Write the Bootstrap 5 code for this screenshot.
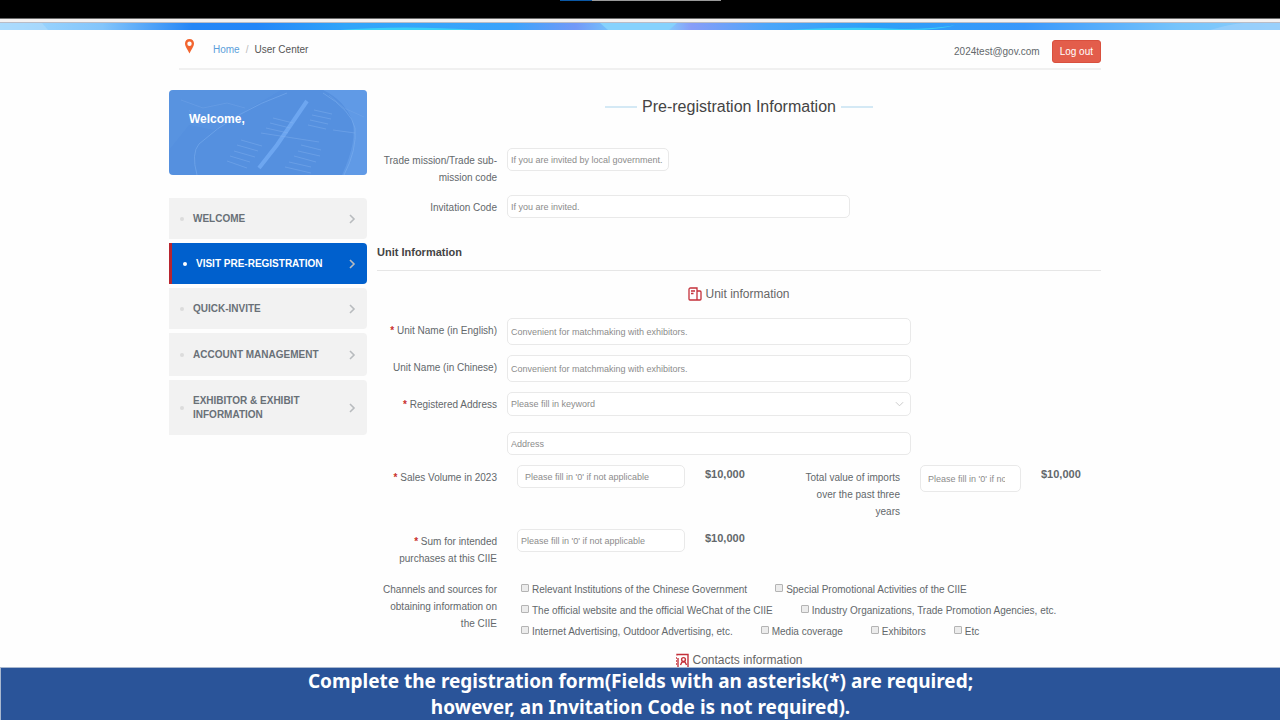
<!DOCTYPE html>
<html lang="en">
<head>
<meta charset="utf-8">
<meta name="viewport" content="width=device-width, initial-scale=1">
<title>User Center - Pre-registration Information</title>
<link href="https://cdn.jsdelivr.net/npm/bootstrap@5.3.0/dist/css/bootstrap.min.css" rel="stylesheet">
<style>
  body { font-family: "Liberation Sans", Arial, sans-serif; font-size: 10px; line-height: 17px; color: #63686b; background: #fefefe; }
  .top-strip { height: 18px; background: #000; }
  .top-strip span { height: 1px; }
  .tab-blue { width: 32px; background: #0a57a4; }
  .tab-gray { width: 129px; background: #9a9a9a; }
  .chrome-line { height: 5px; background: #f3f1f1; border-top: 1px solid #6b6b6b; border-bottom: 1px solid #b9bcc6; }
  .hero-strip { height: 7px; }
  .page-wrap { padding-right: 10px; }
  .page-body { max-width: 932px; }
  .top-bar { margin-left: 10px; height: 40px; border-bottom: 2px solid #f0f0f0; margin-bottom: 20px; }
  .crumb-bar { padding-top: 11px; }
  .crumb-bar .breadcrumb { --bs-breadcrumb-item-padding-x: 6px; --bs-breadcrumb-divider-color: #bbb; font-size: 10px; }
  .crumb-bar a { color: #5c9edb; text-decoration: none; }
  .crumb-bar .active { color: #555; }
  .pin-icon { width: 20px; height: 16px; margin-right: 14px; margin-top: -3px; }
  .account-bar { padding-top: 10px; gap: 12px; }
  .account-name { padding-top: 3px; }
  .btn-logout { --bs-btn-bg: #e35d4b; --bs-btn-color: #fff; --bs-btn-border-color: #d9503e; --bs-btn-hover-bg: #d14f3e; --bs-btn-hover-color: #fff; --bs-btn-padding-x: 7px; --bs-btn-padding-y: 2px; --bs-btn-font-size: 10px; --bs-btn-line-height: 17px; --bs-btn-border-radius: 3px; }

  .side-col { width: 198px; }
  .welcome-card { height: 85px; border-radius: 4px; background: #5590df; margin-bottom: 23px; }
  .welcome-card svg { position: absolute; inset: 0; }
  .welcome-card strong { position: relative; padding: 21px 20px; font-size: 12px; color: #fff; font-weight: 900; }
  .side-nav { gap: 4px; font-weight: 700; line-height: 14px; }
  .side-nav a { padding: 14px 11px 13px; background: #f2f2f2; color: #697077; text-decoration: none; border-radius: 0 4px 4px 0; }
  .side-nav a.tall { padding-top: 15px; padding-bottom: 14px; }
  .side-nav a.current { background: #0060cd; color: #fff; border-left: 3px solid #b8252f; }
  .dot { width: 4px; height: 4px; border-radius: 50%; background: #dcdcdc; margin-right: 9px; }
  .current .dot { background: #fff; }
  .arrow { width: 8px; height: 10px; stroke: #b8bbbe; fill: none; stroke-width: 1.600; }

  .main-col { padding-left: 10px; min-width: 0; }
  .page-title { font-size: 16px; line-height: 34px; color: #444; margin-bottom: 24px; gap: 5px; }
  .page-title::before, .page-title::after { content: ""; width: 32px; height: 2px; background: #d4e9f5; }
  .section-title { font-size: 11px; line-height: 20px; font-weight: 700; color: #444; margin: 24px 0 13px; padding-bottom: 8px; border-bottom: 1px solid #e6e6e6; }
  .sub-title { font-size: 12px; line-height: 20px; color: #666; margin: 0; gap: 3px; }
  .sub-title.first { margin-bottom: 14px; }
  .sub-title svg { width: 14px; height: 14px; }
  .field-row { gap: 10px; margin-bottom: 10px; }
  .field-row.tight { margin-bottom: 9px; }
  .field-name { flex: 0 0 120px; padding-top: 4px; text-align: right; }
  .field-name.second { flex-basis: 98px; }
  .req { color: #c9302c; font-weight: 700; }
  .form-control, .form-select { font-size: 9px; line-height: 13px; height: 23px; min-height: 23px; padding: 4px 3px; border: 1px solid #e9e9e9; border-radius: 5px; background-color: #fff; color: #8c8c8c; }
  .form-control::placeholder { color: #8c8c8c; opacity: 1; }
  .form-control.roomy { height: 27px; }
  .form-control.inset { padding-left: 7px; padding-right: 15px; }
  .form-select { height: 24px; background-image: url("data:image/svg+xml,%3Csvg xmlns='http://www.w3.org/2000/svg' viewBox='0 0 10 6'%3E%3Cpath d='M1 1l4 4 4-4' fill='none' stroke='%23c4c4c4'/%3E%3C/svg%3E"); background-size: 9px 6px; background-position: right 6px center; }
  .w-code { max-width: 162px; } .w-invite { max-width: 343px; } .w-wide { max-width: 404px; }
  .w-sum { max-width: 168px; margin-left: 10px; } .w-import { max-width: 101px; margin-left: 10px; }
  .money-row { padding-right: 21px; }
  .amount { font-weight: 700; font-size: 11px; width: 39px; margin: 1px 0 0 10px; }
  .checks { padding: 2px 0 0 24px; line-height: 21px; column-gap: 28px; }
  .checks .form-check { padding: 0; min-height: 0; gap: 3px; }
  .checks .form-check-input { float: none; margin: 0 0 3px; width: 8px; height: 8px; border: 1px solid #b4b4b4; border-radius: 1px; background-color: #ececec; }
  .line-break { flex-basis: 100%; height: 0; }

  .caption-bar { background: #2a5499; border-top: 1px solid #a9b8cf; border-left: 1px solid #a9b8cf; color: #fff; font-family: "Noto Sans", "Open Sans", sans-serif; font-weight: 700; font-size: 19px; line-height: 26px; }
</style>
</head>
<body>
<div class="top-strip d-flex justify-content-center"><span class="tab-blue"></span><span class="tab-gray"></span></div>
<div class="chrome-line"></div>
<svg class="hero-strip d-block w-100" viewBox="0 0 1280 7" preserveAspectRatio="none" aria-hidden="true">
  <defs><linearGradient id="hero">
    <stop offset="0" stop-color="#a5dbff"/><stop offset=".08" stop-color="#83c5fb"/><stop offset=".15" stop-color="#2486f6"/><stop offset=".2" stop-color="#2386f8"/>
    <stop offset=".27" stop-color="#30a5fa"/><stop offset=".4" stop-color="#3ba3fb"/><stop offset=".45" stop-color="#7399f8"/><stop offset=".48" stop-color="#75c7fc"/>
    <stop offset=".52" stop-color="#84cffc"/><stop offset=".54" stop-color="#889df8"/><stop offset=".6" stop-color="#4ba6fa"/><stop offset=".68" stop-color="#2d9ff8"/>
    <stop offset=".8" stop-color="#3998fb"/><stop offset=".92" stop-color="#76c4fb"/><stop offset="1" stop-color="#8ccdfb"/>
  </linearGradient></defs>
  <path d="M0 0h1280v7H0z" fill="url(#hero)"/>
  <path d="M0 0h42l6 7H0z" fill="#b0dcfb" opacity=".6"/>
  <path d="M600 0h77l-8 7h-61z" fill="#86d2fd"/>
  <path d="M340 7q60-5 140 0zM790 7q60-4 110-1q40 0 60-5q-20 6-50 6z" fill="#3ddcf6" opacity=".8"/>
  <path d="M1210 7q20-6 34-7h36v7z" fill="#a4d2fb" opacity=".6"/>
</svg>

<div class="page-wrap">
<div class="page-body mx-auto">
  <header class="top-bar d-flex justify-content-between">
    <nav class="crumb-bar d-flex align-items-start" aria-label="breadcrumb">
      <svg class="pin-icon" viewBox="0 0 20 16" aria-hidden="true"><path fill="#f2652f" fill-rule="evenodd" d="M10.500 1C7.700 1 6 3 6 5.500C6 8.500 8.500 11 10.500 15.500C12.500 11 15 8.500 15 5.500C15 3 13.300 1 10.500 1zm0 2.500a2.200 2.200 0 1 1 0 4.400a2.200 2.200 0 0 1 0-4.400z"/></svg>
      <ol class="breadcrumb mb-0">
        <li class="breadcrumb-item"><a href="#">Home</a></li>
        <li class="breadcrumb-item active" aria-current="page">User Center</li>
      </ol>
    </nav>
    <div class="account-bar d-flex align-items-start">
      <span class="account-name">2024test@gov.com</span>
      <button type="button" class="btn btn-logout">Log out</button>
    </div>
  </header>

  <div class="d-flex flex-column flex-md-row">
    <aside class="side-col flex-shrink-0">
      <div class="welcome-card position-relative overflow-hidden d-flex align-items-start">
        <svg viewBox="0 0 198 85" width="100%" height="100%" preserveAspectRatio="none" fill="none" stroke="#86b5f1" aria-hidden="true">
          <path d="M0 0h112L45 40L20 35L0 60z" fill="#5f9ae6" stroke="none" opacity=".3"/>
          <path d="M154 0h44v85h-25q16-35 10-55q-8-20-29-30z" fill="#6ea6ef" stroke="none" opacity=".45"/>
          <path d="M28 85Q22 63 30 54Q65 22 118 3M154 3Q182 20 186 38Q188 60 175 85" opacity=".45"/>
          <path d="M138 11L108 55L90 78" stroke-width="4" stroke="#6da6f0"/>
          <path d="M104 28l20 5M101 33l20 5M97 38l22 5M92 43l58 9M72 50l21 6M68 55l21 6M65 61l21 6M61 66l20 6M58 71l20 7M145 20l18 4M143 25l19 4M141 30l18 4M139 35l18 4M132 55l20 5M129 61l22 5M125 66l22 6M120 72l22 5M116 77l26 6M164 40l22 3" opacity=".4"/>
          <path d="M12 10l22 8 24-5 18 5M20 20l10 14 20-6M160 5l15 13 20 9" opacity=".25"/>
        </svg>
        <strong>Welcome,</strong>
      </div>
      <nav class="side-nav d-flex flex-column mb-3" aria-label="User center">
        <a href="#" class="d-flex align-items-center"><i class="dot"></i><span class="flex-grow-1">WELCOME</span><svg class="arrow" viewBox="0 0 8 10"><path d="M2 1l4 4-4 4"/></svg></a>
        <a href="#" class="d-flex align-items-center current" aria-current="page"><i class="dot"></i><span class="flex-grow-1">VISIT PRE-REGISTRATION</span><svg class="arrow" viewBox="0 0 8 10"><path d="M2 1l4 4-4 4"/></svg></a>
        <a href="#" class="d-flex align-items-center"><i class="dot"></i><span class="flex-grow-1">QUICK-INVITE</span><svg class="arrow" viewBox="0 0 8 10"><path d="M2 1l4 4-4 4"/></svg></a>
        <a href="#" class="d-flex align-items-center tall"><i class="dot"></i><span class="flex-grow-1">ACCOUNT MANAGEMENT</span><svg class="arrow" viewBox="0 0 8 10"><path d="M2 1l4 4-4 4"/></svg></a>
        <a href="#" class="d-flex align-items-center"><i class="dot"></i><span class="flex-grow-1">EXHIBITOR &amp; EXHIBIT<br>INFORMATION</span><svg class="arrow" viewBox="0 0 8 10"><path d="M2 1l4 4-4 4"/></svg></a>
      </nav>
    </aside>

    <main class="main-col flex-grow-1">
      <form>
        <h1 class="page-title d-flex justify-content-center align-items-center fw-normal mt-0">Pre-registration Information</h1>
        <div class="field-row tight d-flex align-items-start">
          <label class="field-name" for="mission">Trade mission/Trade sub-<br>mission code</label>
          <input id="mission" class="form-control w-code" placeholder="If you are invited by local government.">
        </div>
        <div class="field-row d-flex align-items-start mb-0">
          <label class="field-name" for="invite">Invitation Code</label>
          <input id="invite" class="form-control w-invite" placeholder="If you are invited.">
        </div>

        <h2 class="section-title">Unit Information</h2>
        <h3 class="sub-title first d-flex justify-content-center align-items-center fw-normal">
          <svg viewBox="0 0 14 14" fill="none" stroke="#c4303a" stroke-width="1.300" aria-hidden="true"><path d="M1 12V2.500Q1 1 2.500 1H9v12H2Q1 13 1 12zM9 4h3q1 0 1 1v7q0 1-1 1H9M3 4h4M3 6.500h2.500"/></svg>
          Unit information</h3>
        <div class="field-row d-flex align-items-start">
          <label class="field-name" for="nameEn"><span class="req">*</span> Unit Name (in English)</label>
          <input id="nameEn" class="form-control roomy w-wide" placeholder="Convenient for matchmaking with exhibitors.">
        </div>
        <div class="field-row d-flex align-items-start">
          <label class="field-name" for="nameCn">Unit Name (in Chinese)</label>
          <input id="nameCn" class="form-control roomy w-wide" placeholder="Convenient for matchmaking with exhibitors.">
        </div>
        <div class="field-row d-flex align-items-start mb-3">
          <label class="field-name" for="region"><span class="req">*</span> Registered Address</label>
          <select id="region" class="form-select w-wide"><option>Please fill in keyword</option></select>
        </div>
        <div class="field-row d-flex align-items-start">
          <span class="field-name"></span>
          <input id="address" class="form-control w-wide" placeholder="Address" aria-label="Address">
        </div>
        <div class="field-row money-row tight d-flex align-items-start">
          <label class="field-name" for="sales"><span class="req">*</span> Sales Volume in 2023</label>
          <input id="sales" class="form-control inset w-sum" placeholder="Please fill in '0' if not applicable">
          <span class="amount">$10,000</span>
          <label class="field-name second ms-auto" for="imports">Total value of imports over the past three years</label>
          <input id="imports" class="form-control roomy inset w-import" placeholder="Please fill in '0' if not applicable">
          <span class="amount">$10,000</span>
        </div>
        <div class="field-row d-flex align-items-start">
          <label class="field-name" for="sum"><span class="req">*</span> Sum for intended<br>purchases at this CIIE</label>
          <input id="sum" class="form-control w-sum" placeholder="Please fill in '0' if not applicable">
          <span class="amount">$10,000</span>
        </div>
        <div class="d-flex align-items-start" role="group" aria-labelledby="channels">
          <span class="field-name" id="channels">Channels and sources for obtaining information on<br>the CIIE</span>
          <div class="checks d-flex flex-wrap flex-grow-1">
            <div class="form-check d-flex align-items-center mb-0"><input class="form-check-input" type="checkbox" id="c1"><label for="c1">Relevant Institutions of the Chinese Government</label></div>
            <div class="form-check d-flex align-items-center mb-0"><input class="form-check-input" type="checkbox" id="c2"><label for="c2">Special Promotional Activities of the CIIE</label></div>
            <span class="line-break"></span>
            <div class="form-check d-flex align-items-center mb-0"><input class="form-check-input" type="checkbox" id="c3"><label for="c3">The official website and the official WeChat of the CIIE</label></div>
            <div class="form-check d-flex align-items-center mb-0"><input class="form-check-input" type="checkbox" id="c4"><label for="c4">Industry Organizations, Trade Promotion Agencies, etc.</label></div>
            <span class="line-break"></span>
            <div class="form-check d-flex align-items-center mb-0"><input class="form-check-input" type="checkbox" id="c5"><label for="c5">Internet Advertising, Outdoor Advertising, etc.</label></div>
            <div class="form-check d-flex align-items-center mb-0"><input class="form-check-input" type="checkbox" id="c6"><label for="c6">Media coverage</label></div>
            <div class="form-check d-flex align-items-center mb-0"><input class="form-check-input" type="checkbox" id="c7"><label for="c7">Exhibitors</label></div>
            <div class="form-check d-flex align-items-center mb-0"><input class="form-check-input" type="checkbox" id="c8"><label for="c8">Etc</label></div>
          </div>
        </div>
        <h3 class="sub-title d-flex justify-content-center align-items-center fw-normal mt-2">
          <svg viewBox="0 0 14 14" fill="none" stroke="#c4303a" stroke-width="1.400" aria-hidden="true"><path d="M2 2.500V1.500h11V14M3 5v9M1 5h1M1 8h1M1 11h1M5.500 12l1.500-3h3l1.500 3"/><circle cx="8.500" cy="6.500" r="1.900"/></svg>
          Contacts information</h3>
      </form>
    </main>
  </div>
</div>
</div>

<div class="caption-bar fixed-bottom text-center">Complete the registration form(Fields with an asterisk(*) are required;<br>however, an Invitation Code is not required).</div>
<script src="https://cdn.jsdelivr.net/npm/bootstrap@5.3.0/dist/js/bootstrap.bundle.min.js"></script>
</body>
</html>
